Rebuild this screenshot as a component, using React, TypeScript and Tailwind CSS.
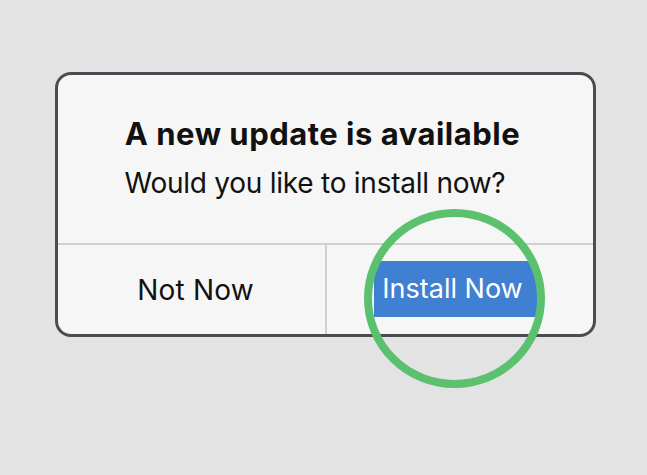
export default function App() {
  return (
    <div className="min-h-screen w-full bg-[#e3e3e3] pl-[55px] pt-[72px] font-['Inter','Liberation_Sans',sans-serif]">
      {/* Dialog */}
      <div className="relative flex h-[265px] w-[541px] flex-col rounded-[16px] border-[3px] border-[#474d53] bg-[#f6f6f6]">
        <div className="flex h-[168px] flex-col items-center pt-[41px] text-[#111]">
          <h1 className="pr-[6px] text-[31px] font-bold leading-[36px] tracking-[0.5px]">A new update is available</h1>
          <p className="mt-[14px] pr-[21px] text-[28px] leading-[34px] tracking-[-0.25px]">Would you like to install now?</p>
        </div>
        <div className="h-[2px] bg-[#d0d0d0]" />
        <div className="flex flex-1">
          <button className="flex w-[267px] items-center justify-center pl-[8px] text-[28px] tracking-[0.2px] text-[#111]">
            Not Now
          </button>
          <div className="w-[2px] bg-[#d0d0d0]" />
          <div className="flex flex-1 items-start pl-[47px] pt-[16px]">
            <button className="flex h-[56px] w-[163px] items-center justify-center pr-[6px] text-[27px] text-white bg-[#3f80d2]">
              Install Now
            </button>
          </div>
        </div>

        {/* highlight ring */}
        <svg
          className="pointer-events-none absolute left-[306px] top-[134px]"
          width="181"
          height="179"
          viewBox="0 0 181 179"
        >
          <ellipse cx="90.5" cy="89.5" rx="86.5" ry="85.5" fill="none" stroke="#5bc16e" strokeWidth="8" />
        </svg>
      </div>
    </div>
  );
}
